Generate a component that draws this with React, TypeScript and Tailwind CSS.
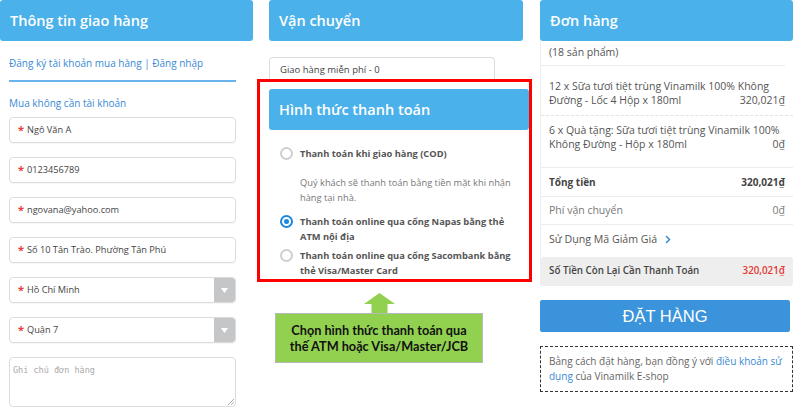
import React from 'react';

const font = { fontFamily: '"Open Sans", "Noto Sans", sans-serif' };

function PanelHeader({ title }: { title: string }) {
  return (
    <div className="h-[41px] bg-[#4bb1ea] rounded-[3px] flex items-center pl-[10px] text-white text-[14.5px] font-semibold">
      {title}
    </div>
  );
}

function Field({ value, select }: { value: string; select?: boolean }) {
  return (
    <div className="h-[26px] w-[227px] mt-[14px] border border-[#dcdcdc] rounded-[4px] flex items-center overflow-hidden shadow-[0_1px_1px_rgba(0,0,0,0.04)]">
      <span className="pl-[8px] pr-[3px] text-[#e53e3e] text-[11px] font-bold">*</span>
      <span className="flex-1 text-[9.2px] text-[#444]">{value}</span>
      {select && (
        <div className="w-[21px] h-full bg-[#c4c6c8] flex items-center justify-center">
          <svg width="7" height="5" viewBox="0 0 7 5">
            <path d="M0 0h7L3.5 5z" fill="#fff" />
          </svg>
        </div>
      )}
    </div>
  );
}

function Radio({ checked }: { checked?: boolean }) {
  return checked ? (
    <span className="w-[13px] h-[13px] rounded-full border-[2px] border-[#1b87e0] flex items-center justify-center shrink-0">
      <span className="w-[5px] h-[5px] rounded-full bg-[#1b87e0]" />
    </span>
  ) : (
    <span className="block w-[13px] h-[13px] rounded-full border-[2px] border-[#cfcfcf] shrink-0" />
  );
}

export default function App() {
  return (
    <div className="w-[793px] h-[419px] bg-white overflow-hidden flex text-[#555]" style={font}>
      {/* Thông tin giao hàng */}
      <div className="w-[253px] shrink-0">
        <PanelHeader title="Thông tin giao hàng" />
        <div className="pl-[9px]">
          <div className="mt-[14px] leading-[16px] text-[10px] text-[#3a8ad4]">
            Đăng ký tài khoản mua hàng | Đăng nhập
          </div>
          <div className="mt-[9px] h-[2px] w-[227px] bg-[#69b3ec]" />
          <div className="mt-[13px] leading-[16px] text-[10px] text-[#3a8ad4]">Mua không cần tài khoản</div>
          <div className="-mt-[8px]">
            <Field value="Ngô Văn A" />
            <Field value="0123456789" />
            <Field value="ngovana@yahoo.com" />
            <Field value="Số 10 Tân Trào. Phường Tân Phú" />
            <Field value="Hồ Chí Minh" select />
            <Field value="Quận 7" select />
          </div>
          <div className="relative mt-[14px] h-[50px] w-[227px] border border-[#dcdcdc] rounded-[4px] px-[3px] pt-[2px] leading-[14px]">
            <span className="text-[8.5px] text-[#aaa]" style={{ fontFamily: '"DejaVu Sans Mono", monospace' }}>
              Ghi chú đơn hàng
            </span>
            <svg className="absolute right-[1px] bottom-[1px]" width="6" height="6" viewBox="0 0 6 6">
              <path d="M6 0L0 6M6 3L3 6" stroke="#999" strokeWidth="0.8" />
            </svg>
          </div>
        </div>
      </div>

      {/* Vận chuyển + thanh toán */}
      <div className="w-[254px] shrink-0 ml-[16px]">
        <PanelHeader title="Vận chuyển" />
        <div className="mt-[16px] h-[24px] w-[226px] border border-[#dcdcdc] border-b-0 rounded-t-[4px] pl-[10px] pt-[5px] text-[9.5px] text-[#444]">
          Giao hàng miễn phí - 0
        </div>
        <div className="-mt-[2px] -ml-[12px] w-[275px] h-[203px] border-[3px] border-[#ff0000] pl-[9px] pt-[7px]">
          <PanelHeader title="Hình thức thanh toán" />
          <div className="pl-[11px] pr-[10px] text-[9.3px]">
            <div className="mt-[16px] flex items-center gap-[7px] font-bold text-[#555] leading-[15px]">
              <Radio />
              <span>Thanh toán khi giao hàng (COD)</span>
            </div>
            <div className="mt-[14px] pl-[20px] leading-[15px] text-[9.3px] text-[#777]">
              Quý khách sẽ thanh toán bằng tiền mặt khi nhận hàng tại nhà.
            </div>
            <div className="mt-[9px] flex items-start gap-[7px] font-bold text-[#555] leading-[15px]">
              <span className="mt-[1px] shrink-0">
                <Radio checked />
              </span>
              <span>Thanh toán online qua cổng Napas bằng thẻ ATM nội địa</span>
            </div>
            <div className="mt-[4px] flex items-start gap-[7px] font-bold text-[#555] leading-[15px]">
              <span className="mt-[1px] shrink-0">
                <Radio />
              </span>
              <span>Thanh toán online qua cổng Sacombank bằng thẻ Visa/Master Card</span>
            </div>
          </div>
        </div>
        <div className="ml-[6px] w-[208px] mt-[11px] flex flex-col items-center">
          <svg width="31" height="20" viewBox="0 0 31 20">
            <path d="M15.5 0L31 11H23.5V20H7.5V11H0z" fill="#92d050" />
          </svg>
          <div
            className="w-[208px] h-[50px] bg-[#92d050] border border-[#b8b8b8] flex items-center justify-center text-center text-[12.7px] font-bold text-[#111] leading-[16px]"
            style={{ fontFamily: 'Lato, "Open Sans", sans-serif' }}
          >
            Chọn hình thức thanh toán qua
            <br />
            thế ATM hoặc Visa/Master/JCB
          </div>
        </div>
      </div>

      {/* Đơn hàng */}
      <div className="w-[253px] shrink-0 ml-[17px]">
        <PanelHeader title="Đơn hàng" />
        <div className="text-[10.5px] border-l border-[#eeeeee]">
          <div className="h-[25px] pt-[3px] pl-[8px] leading-[16px] border-b border-[#ececec] mr-[8px]">(18 sản phẩm)</div>
          <div className="h-[50px] pt-[13px] pl-[8px] pr-[8px] leading-[14px] border-b border-dashed border-[#e2e2e2]">
            <div>12 x Sữa tươi tiệt trùng Vinamilk 100% Không</div>
            <div className="flex justify-between">
              <span>Đường - Lốc 4 Hộp x 180ml</span>
              <span>320,021₫</span>
            </div>
          </div>
          <div className="h-[52px] pt-[7px] pl-[8px] pr-[8px] leading-[14px] border-b border-[#ececec]">
            <div>6 x Quà tặng: Sữa tươi tiệt trùng Vinamilk 100%</div>
            <div className="flex justify-between">
              <span>Không Đường - Hộp x 180ml</span>
              <span>0₫</span>
            </div>
          </div>
          <div className="h-[29px] pl-[8px] pr-[8px] flex items-center justify-between font-bold text-[10px] text-[#444] border-b border-[#ececec]">
            <span>Tổng tiền</span>
            <span>320,021₫</span>
          </div>
          <div className="h-[28px] pl-[8px] pr-[8px] flex items-center justify-between text-[#777] border-b border-[#ececec]">
            <span>Phí vận chuyển</span>
            <span>0₫</span>
          </div>
          <div className="h-[32px] pl-[8px] pt-[6px] leading-[16px] text-[10.6px] flex items-start gap-[8px]">
            <span>Sử Dụng Mã Giảm Giá</span>
            <svg className="mt-[4px]" width="6" height="9" viewBox="0 0 6 9">
              <path d="M1 1l3.5 3.5L1 8" stroke="#3a8ad4" strokeWidth="1.5" fill="none" />
            </svg>
          </div>
          <div className="h-[29px] bg-[#eeeeee] rounded-[3px] pl-[8px] pr-[8px] flex items-center justify-between font-semibold text-[9.8px] text-[#444]">
            <span>Số Tiền Còn Lại Cần Thanh Toán</span>
            <span className="text-[#e53935]">320,021₫</span>
          </div>
        </div>
        <div
          className="mt-[14px] h-[32px] w-[250px] bg-[#3b93db] rounded-[2px] flex items-center justify-center text-white text-[16.5px]"
          style={{ fontFamily: '"Liberation Sans", Arial, sans-serif' }}
        >
          ĐẶT HÀNG
        </div>
        <div className="mt-[14px] h-[46px] w-[253px] border-[1.5px] border-dashed border-[#333] pl-[8px] pr-[4px] pt-[7px] text-[10px] leading-[15px] text-[#666] whitespace-nowrap">
          <div>
            Bằng cách đặt hàng, bạn đồng ý với <span className="text-[#3a8ad4]">điều khoản sử</span>
          </div>
          <div>
            <span className="text-[#3a8ad4]">dụng</span> của Vinamilk E-shop
          </div>
        </div>
      </div>
    </div>
  );
}
